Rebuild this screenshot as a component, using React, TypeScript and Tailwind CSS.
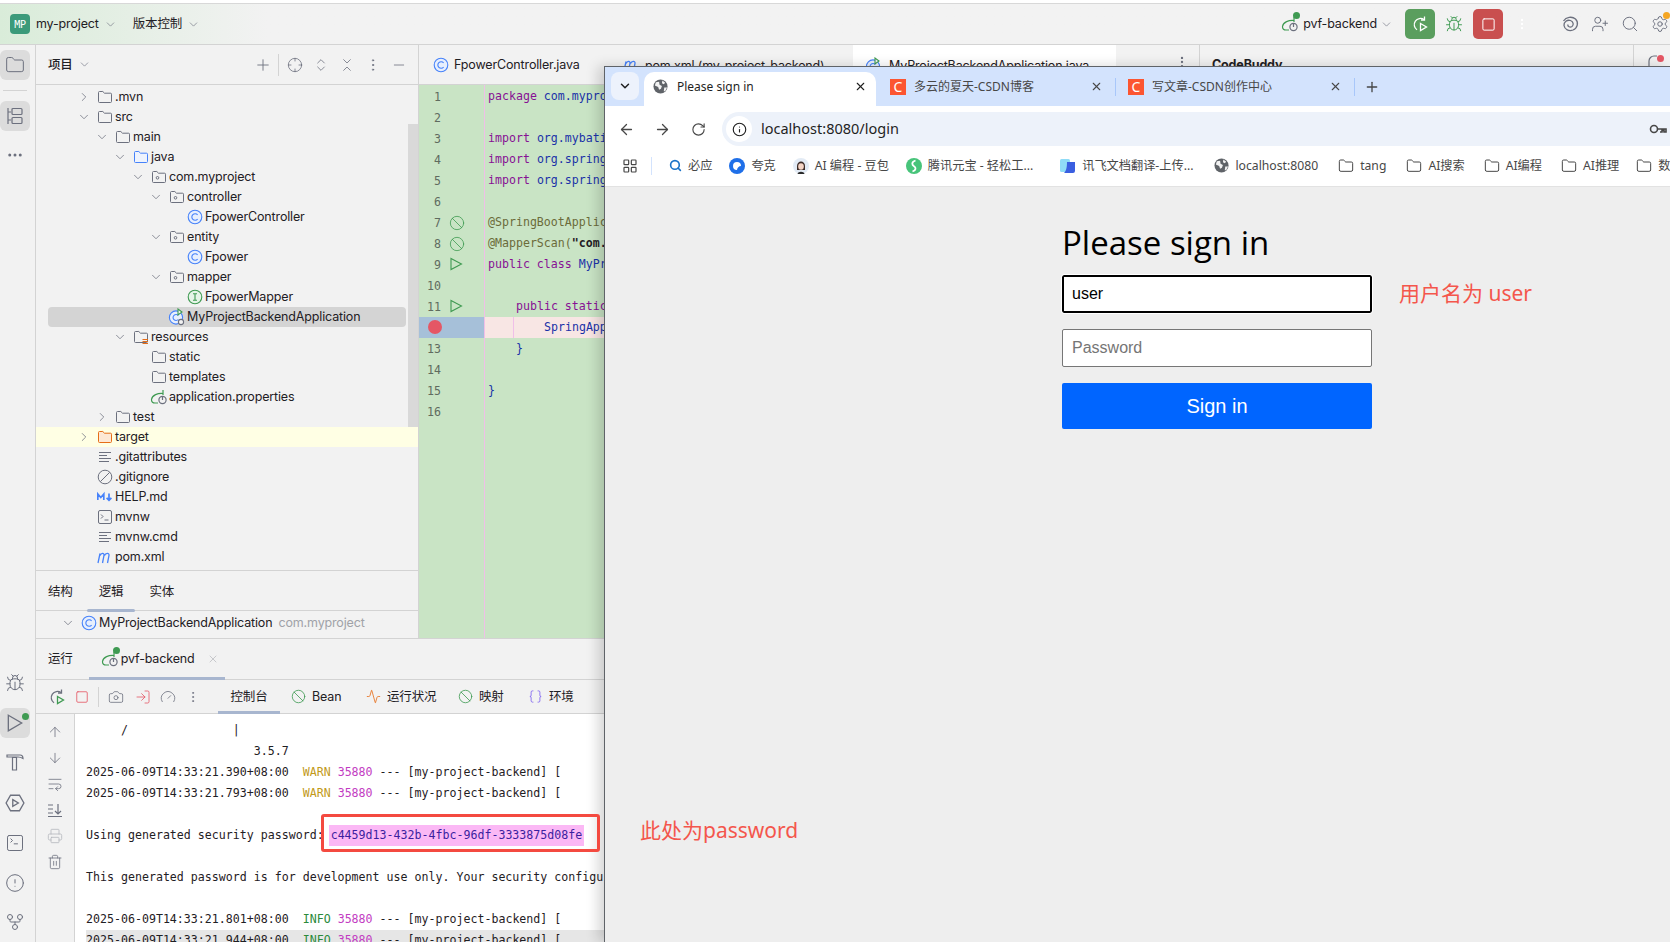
import React from 'react';
import {
  Activity, ArrowDown, ArrowLeft, ArrowRight, ArrowUp, Ban, Braces, Bug, Camera, ChevronDown, ChevronRight,
  ChevronsDownUp, ChevronsUpDown, CircleAlert, Crosshair, Ellipsis, EllipsisVertical, Folder, Gauge, GitFork,
  Info, LayoutGrid, LogIn, Minus, Plus, Printer, RotateCw, Search, Settings, Square, SquareTerminal,
  Trash2, UserPlus, WrapText, X,
} from 'lucide-react';

const gray = '#6c707e';

const ClassIcon = ({ color = '#4682fa', letter = 'C' }: { color?: string; letter?: 'C' | 'I' }) => (
  <svg width="16" height="16" viewBox="0 0 16 16" fill="none" stroke={color} strokeWidth="1.1" className="shrink-0">
    <circle cx="8" cy="8" r="6.8" fill={color === '#4682fa' ? '#e7effd' : '#e6f4e8'} />
    {letter === 'C' ? <path d="M10.6 5.8A3.3 3.3 0 1 0 10.6 10.2" /> : <path d="M6 4.8h4M6 11.2h4M8 4.8v6.4" />}
  </svg>
);

const SpringIcon = () => (
  <svg width="18" height="18" viewBox="0 0 18 18" fill="none" strokeWidth="1.2" className="shrink-0">
    <path d="M13 5.5C8 5 2 7 1.5 11.5 1.3 14 3 15 5 15h3" stroke="#3f9a52" />
    <path d="M13 2v5" stroke="#3f9a52" />
    <circle cx="12.5" cy="12" r="3.6" stroke={gray} />
    <path d="M12.5 9v3" stroke={gray} />
  </svg>
);

const RunConfigIcon = () => (
  <div className="relative shrink-0">
    <SpringIcon />
    <div className="absolute -right-[1px] -top-[3px] size-[7px] rounded-full bg-[#3f9a52]" />
  </div>
);

const AppIcon = () => (
  <svg width="18" height="18" viewBox="0 0 18 18" fill="none" strokeWidth="1.1" className="shrink-0">
    <circle cx="8" cy="9.5" r="6.6" stroke="#4682fa" fill="#e7effd" />
    <path d="M10.3 7.5A3 3 0 1 0 10.3 11.5" stroke="#4682fa" />
    <path d="M10 1v6l4-3z" stroke="#3f9a52" fill="#f2f2f2" />
    <circle cx="13" cy="14" r="2.6" stroke={gray} fill="#f2f2f2" />
  </svg>
);

const RerunIcon = ({ color, play }: { color: string; play: string }) => (
  <svg width="18" height="18" viewBox="0 0 18 18" fill="none" strokeWidth="1.3" className="shrink-0">
    <path d="M13 4.500A6.200 6.200 0 1 0 6 14.800" stroke={color} />
    <path d="M13.500 1.500v3.500H10" stroke={color} />
    <path d="M9.500 8.500 15.500 12 9.500 15.500z" stroke={play} />
  </svg>
);

const PackageFolder = () => (
  <svg width="16" height="16" viewBox="0 0 16 16" fill="none" stroke={gray} strokeWidth="1" className="shrink-0">
    <path d="M1.5 3.5a1 1 0 0 1 1-1h3.3l1.7 1.7h6a1 1 0 0 1 1 1v7.3a1 1 0 0 1-1 1h-11a1 1 0 0 1-1-1z" />
    <circle cx="6.5" cy="8.8" r="1.3" />
  </svg>
);

const PlainFolder = ({ stroke = gray, fill = 'none', badge = false }: { stroke?: string; fill?: string; badge?: boolean }) => (
  <svg width="16" height="16" viewBox="0 0 16 16" fill={fill} stroke={stroke} strokeWidth="1" className="shrink-0">
    <path d="M1.5 3.5a1 1 0 0 1 1-1h3.3l1.7 1.7h6a1 1 0 0 1 1 1v7.3a1 1 0 0 1-1 1h-11a1 1 0 0 1-1-1z" />
    {badge && <path d="M9.5 10.5h5.5M9.5 12.5h5.5M9.5 14.5h5.5" stroke="#e66d17" strokeWidth="1.2" />}
  </svg>
);

const LinesIcon = () => (
  <svg width="16" height="16" viewBox="0 0 16 16" stroke={gray} strokeWidth="1" className="shrink-0">
    <path d="M2 3.5h12M2 6.5h8M2 9.5h12M2 12.5h10" />
  </svg>
);

const IgnoreIcon = () => (
  <svg width="16" height="16" viewBox="0 0 16 16" fill="none" stroke={gray} strokeWidth="1" className="shrink-0">
    <circle cx="8" cy="8" r="6.8" />
    <path d="M3.4 12.6 12.6 3.4" />
  </svg>
);

const MdIcon = () => (
  <svg width="16" height="16" viewBox="0 0 16 16" fill="none" stroke="#4682fa" strokeWidth="1.7" className="shrink-0">
    <path d="M0.8 11V5l3 3.5 3-3.5v6M12 4.5v6.5M9.6 8.8 12 11.2l2.4-2.4" />
  </svg>
);

const ShellIcon = () => (
  <svg width="16" height="16" viewBox="0 0 16 16" fill="none" stroke={gray} strokeWidth="1" className="shrink-0">
    <rect x="1.5" y="1.5" width="13" height="13" rx="1.5" />
    <path d="M4 5.5 6 7.5 4 9.5M7.5 11h4" />
  </svg>
);

const MavenIcon = () => (
  <svg width="16" height="16" viewBox="0 0 16 16" fill="none" stroke="#4682fa" strokeWidth="1.3" className="shrink-0">
    <path d="M1 14 3 4.5M3 6.5C4 4 7.5 3.500 7 6.500L5.500 14M7.500 6.500C8.500 4 12.500 3.500 12 6.500L10.500 14" />
  </svg>
);

const StructureIcon = () => (
  <svg width="20" height="20" viewBox="0 0 20 20" fill="none" stroke={gray} strokeWidth="1.2">
    <path d="M3 2v16M3 6h3M3 14h3" />
    <rect x="7" y="2.500" width="10" height="6" rx="1" />
    <rect x="7" y="11.500" width="10" height="6" rx="1" />
  </svg>
);

const HammerIcon = () => (
  <svg width="20" height="20" viewBox="0 0 20 20" fill="none" stroke={gray} strokeWidth="1.2">
    <path d="M2 3h13c2 0 3 1.500 3 3.500-1.500-1-3-1.500-5-1.500v0H2z" />
    <path d="M7.500 5.500h4V18h-4z" />
  </svg>
);

const SpiralIcon = () => (
  <svg width="18" height="18" viewBox="0 0 18 18" fill="none" stroke={gray} strokeWidth="1.3" className="shrink-0">
    <path d="M2.500 6C5 2 11 1 14.500 4c3.500 3.500 2 9-2.500 11-4 1.500-8.500-.5-9-4.500C2.800 7 6 4.500 9.500 5.500c3 1 3.500 4.500 1.500 6-2 1.300-4.500 0-4.200-2" />
  </svg>
);

const ScrollEndIcon = () => (
  <svg width="16" height="16" viewBox="0 0 16 16" fill="none" stroke={gray} strokeWidth="1.2">
    <path d="M1 3h5M1 7h5M1 11h5M1 14.500h14M11 2v10M8 9l3 3 3-3" />
  </svg>
);

const KeyIcon = () => (
  <svg width="18" height="18" viewBox="0 0 18 18" fill="none" stroke="#474747" strokeWidth="1.6" className="ml-auto mr-[3px] shrink-0">
    <circle cx="5" cy="9" r="3.500" />
    <path d="M8.500 9H17v3h-2v-1.500h-2V12h-2" />
  </svg>
);

const QuarkIcon = () => (
  <svg width="16" height="16" viewBox="0 0 16 16" className="shrink-0">
    <circle cx="8" cy="8" r="8" fill="#1f6fe8" />
    <path d="M8 4a4 4 0 1 0 0 8c0-2 2-4 4-4a4 4 0 0 0-4-4z" fill="#ffffff" />
  </svg>
);

const YuanbaoIcon = () => (
  <svg width="16" height="16" viewBox="0 0 16 16" fill="none" className="shrink-0">
    <circle cx="8" cy="8" r="8" fill="#47c47a" />
    <path d="M9.500 2.500C5 4 6 7 8 8.200c2 1.200 2.500 4-1.500 5.300" stroke="#ffffff" strokeWidth="1.800" />
  </svg>
);

const DoubaoIcon = () => (
  <svg width="16" height="16" viewBox="0 0 16 16" className="shrink-0">
    <circle cx="8" cy="8" r="8" fill="#e3ebf5" />
    <path d="M4 8c0-6 8-6 8 0v4H4z" fill="#3d2b26" />
    <ellipse cx="8" cy="8.500" rx="2.800" ry="3.300" fill="#f5d5c6" />
    <path d="M4.500 16c.5-3 6.500-3 7 0z" fill="#2a2a2a" />
  </svg>
);

const XunfeiIcon = () => (
  <svg width="16" height="16" viewBox="0 0 16 16" className="shrink-0">
    <rect x="0" y="1" width="10" height="13" rx="1.500" fill="#8fdcf7" />
    <path d="M7 4h8v9a2 2 0 0 1-2 2H4c2-2 3-5 3-11z" fill="#3a5fe0" />
  </svg>
);

type TreeRow = { label: string; depth: number; chevron?: 'open' | 'closed'; icon: React.ReactNode; selected?: boolean; marked?: boolean };

const treeRows: TreeRow[] = [
  { label: '.mvn', depth: 0, chevron: 'closed', icon: <PlainFolder /> },
  { label: 'src', depth: 0, chevron: 'open', icon: <PlainFolder /> },
  { label: 'main', depth: 1, chevron: 'open', icon: <PlainFolder /> },
  { label: 'java', depth: 2, chevron: 'open', icon: <PlainFolder stroke="#4682fa" fill="#eef3fd" /> },
  { label: 'com.myproject', depth: 3, chevron: 'open', icon: <PackageFolder /> },
  { label: 'controller', depth: 4, chevron: 'open', icon: <PackageFolder /> },
  { label: 'FpowerController', depth: 5, icon: <ClassIcon /> },
  { label: 'entity', depth: 4, chevron: 'open', icon: <PackageFolder /> },
  { label: 'Fpower', depth: 5, icon: <ClassIcon /> },
  { label: 'mapper', depth: 4, chevron: 'open', icon: <PackageFolder /> },
  { label: 'FpowerMapper', depth: 5, icon: <ClassIcon color="#3f9a52" letter="I" /> },
  { label: 'MyProjectBackendApplication', depth: 4, icon: <AppIcon />, selected: true },
  { label: 'resources', depth: 2, chevron: 'open', icon: <PlainFolder badge /> },
  { label: 'static', depth: 3, icon: <PlainFolder /> },
  { label: 'templates', depth: 3, icon: <PlainFolder /> },
  { label: 'application.properties', depth: 3, icon: <SpringIcon /> },
  { label: 'test', depth: 1, chevron: 'closed', icon: <PlainFolder /> },
  { label: 'target', depth: 0, chevron: 'closed', icon: <PlainFolder stroke="#e66d17" fill="#fde8d4" />, marked: true },
  { label: '.gitattributes', depth: 0, icon: <LinesIcon /> },
  { label: '.gitignore', depth: 0, icon: <IgnoreIcon /> },
  { label: 'HELP.md', depth: 0, icon: <MdIcon /> },
  { label: 'mvnw', depth: 0, icon: <ShellIcon /> },
  { label: 'mvnw.cmd', depth: 0, icon: <LinesIcon /> },
  { label: 'pom.xml', depth: 0, icon: <MavenIcon /> },
];

const depthPad = ['pl-[41px]', 'pl-[59px]', 'pl-[77px]', 'pl-[95px]', 'pl-[113px]', 'pl-[131px]'];

const ProjectTree = () => (
  <div className="relative flex-1 pt-[2px]">
    <div className="absolute right-0 top-[39px] h-[308px] w-[10px] bg-[#d9d9d9]" />
    {treeRows.map(row => (
      <div key={row.label} className={`relative h-[20px] ${row.marked ? 'bg-[#ffffe4]' : ''}`}>
        {row.selected && <div className="absolute inset-y-0 left-[12px] w-[358px] rounded-[4px] bg-[#d4d4d4]" />}
        <div className={`relative flex h-full items-center ${depthPad[row.depth]}`}>
          <div className="flex w-[20px] shrink-0 items-center">
            {row.chevron === 'open' && <ChevronDown size={14} strokeWidth={1.3} color={gray} />}
            {row.chevron === 'closed' && <ChevronRight size={14} strokeWidth={1.3} color={gray} />}
          </div>
          <div className="flex w-[16px] shrink-0 justify-center">{row.icon}</div>
          <span className="ml-[2px] text-[12.5px] text-[#1f2024]">{row.label}</span>
        </div>
      </div>
    ))}
  </div>
);

const K = ({ children }: { children: React.ReactNode }) => <span className="text-[#871094]">{children}</span>;
const P = ({ children }: { children: React.ReactNode }) => <span className="text-[#1a32a8]">{children}</span>;

const codeLines: React.ReactNode[] = [
  <><K>package</K> <P>com.myproject;</P></>,
  '',
  <><K>import</K> <P>org.mybatis.spring;</P></>,
  <><K>import</K> <P>org.springframework;</P></>,
  <><K>import</K> <P>org.springframework;</P></>,
  '',
  <span className="text-[#6b6b3a]">@SpringBootApplication</span>,
  <><span className="text-[#6b6b3a]">@MapperScan(</span><span className="font-bold text-[#1f2024]">"com.myproject"</span></>,
  <><K>public class</K> <P>MyProjectBackendApplication</P></>,
  '',
  <span className="ml-[28px]"><K>public static void</K></span>,
  <span className="ml-[56px]"><P>SpringApplication.run</P></span>,
  <span className="ml-[28px]"><P>{'}'}</P></span>,
  '',
  <P>{'}'}</P>,
  '',
];

const PlayGutter = () => (
  <svg width="14" height="14" viewBox="0 0 14 14" fill="none" stroke="#3f9a52" strokeWidth="1.1"><path d="M2 1.500 12.500 7 2 12.500z" /></svg>
);

const gutterIcons: Record<number, React.ReactNode> = {
  7: <Ban size={16} strokeWidth={1.2} color="#3f9a52" />,
  8: <Ban size={16} strokeWidth={1.2} color="#3f9a52" />,
  9: <PlayGutter />,
  11: <PlayGutter />,
};

const Editor = () => (
  <div className="flex w-[781px] flex-col border-r border-[#d3d3d3]">
    <div className="flex h-[40px] shrink-0 border-b border-[#d3d3d3] text-[12.5px] text-[#1f2024]">
      <div className="flex w-[166px] items-center gap-[5px] pl-[14px] pt-[1px]">
        <ClassIcon />
        <span>FpowerController.java</span>
      </div>
      <div className="flex w-[268px] items-start gap-[6px] pl-[38px] pt-[12px]">
        <MavenIcon />
        <span>pom.xml (my-project-backend)</span>
      </div>
      <div className="flex w-[263px] items-start gap-[6px] bg-white pl-[12px] pt-[12px]">
        <AppIcon />
        <span>MyProjectBackendApplication.java</span>
      </div>
      <div className="flex flex-1 items-start justify-end pr-[10px] pt-[10px]">
        <EllipsisVertical size={14} color={gray} />
      </div>
    </div>
    <div className="flex flex-1 overflow-hidden bg-[#c9e4c5] font-['DejaVu_Sans_Mono',monospace] text-[11.6px] tracking-normal">
      <div className="flex w-[65px] shrink-0 flex-col pt-[1px]">
        {codeLines.map((_, i) => (
          <div key={i} className={`relative h-[21px] ${i === 11 ? 'bg-[#a6c0d9]' : ''}`}>
            {i === 11 ? (
              <div className="absolute left-[9px] top-[3px] size-[14px] rounded-full bg-[#e55765]" />
            ) : (
              <span className="absolute right-[43px] top-[3px] text-[#5f6b5f]">{i + 1}</span>
            )}
            {gutterIcons[i + 1] && <div className="absolute left-[30px] top-[3px]">{gutterIcons[i + 1]}</div>}
          </div>
        ))}
      </div>
      <div className="flex-1 border-l border-[#f0bfe8] pt-[1px]">
        {codeLines.map((line, i) => (
          <div key={i} className={`relative h-[21px] whitespace-pre pl-[3px] leading-[21px] ${i === 11 ? 'bg-[#f8e6e4]' : ''}`}>
            {i === 11 && <div className="absolute inset-y-0 left-[28px] w-px bg-[#f0bfe8]" />}
            {line}
          </div>
        ))}
      </div>
    </div>
  </div>
);

const Warn = () => <span className="text-[#c29a1a]"> WARN </span>;
const Info2 = () => <span className="text-[#2a8a3a]"> INFO </span>;
const Pid = () => <span className="text-[#c23bc2]">35880</span>;

const logRow = (time: string, level: React.ReactNode) => (
  <>{time} {level}<Pid /> --- [my-project-backend] [</>
);

const consoleRows: { id: string; node: React.ReactNode; shaded?: boolean }[] = [
  { id: 'a', node: '     /               |' },
  { id: 'b', node: '                        3.5.7' },
  { id: 'c', node: logRow('2025-06-09T14:33:21.390+08:00', <Warn />) },
  { id: 'd', node: logRow('2025-06-09T14:33:21.793+08:00', <Warn />) },
  { id: 'e', node: '' },
  { id: 'f', node: <>Using generated security password: <span className="-mx-[2px] inline-block h-[21px] bg-[#fbb8f5] px-[2px] leading-[21px] text-[#3b1fa0]">c4459d13-432b-4fbc-96df-3333875d08fe</span></> },
  { id: 'g', node: '' },
  { id: 'h', node: 'This generated password is for development use only. Your security configuration must be updated' },
  { id: 'i', node: '' },
  { id: 'j', node: logRow('2025-06-09T14:33:21.801+08:00', <Info2 />) },
  { id: 'k', node: logRow('2025-06-09T14:33:21.944+08:00', <Info2 />), shaded: true },
];

const runTabs = [
  { label: 'Bean', icon: <Ban size={15} strokeWidth={1.3} color="#3f9a52" />, w: 'w-[75px]' },
  { label: '运行状况', icon: <Activity size={15} strokeWidth={1.3} color="#e66d17" />, w: 'w-[92px]' },
  { label: '映射', icon: <Ban size={15} strokeWidth={1.3} color="#3f9a52" />, w: 'w-[70px]' },
  { label: '环境', icon: <Braces size={15} strokeWidth={1.3} color="#7a5cf0" />, w: 'w-[70px]' },
];

const RunPanel = () => (
  <div className="flex h-[304px] flex-col border-t border-[#d3d3d3]">
    <div className="flex h-[41px] shrink-0 items-center border-b border-[#d3d3d3] text-[12.5px] text-[#1f2024]">
      <span className="ml-[12px] mt-[1px]">运行</span>
      <div className="relative ml-[16px] flex h-full w-[136px] items-center gap-[2px] pl-[12px]">
        <RunConfigIcon />
        <span className="mt-[1px]">pvf-backend</span>
        <X size={12} strokeWidth={1.2} color="#a9abb2" className="ml-[10px]" />
        <div className="absolute inset-x-0 bottom-[-1px] h-[3px] bg-[#a8b6cf]" />
      </div>
    </div>
    <div className="flex h-[34px] shrink-0 items-center border-b border-[#d3d3d3] text-[12.5px] text-[#1f2024]">
      <div className="ml-[12px]"><RerunIcon color={gray} play="#3f9a52" /></div>
      <Square size={14} strokeWidth={1.4} color="#e55765" className="ml-[9px]" />
      <div className="ml-[9px] h-[20px] w-px bg-[#d3d3d3]" />
      <Camera size={16} strokeWidth={1.2} color={gray} className="ml-[9px]" />
      <LogIn size={16} strokeWidth={1.2} color="#e55765" className="ml-[11px]" />
      <Gauge size={16} strokeWidth={1.2} color={gray} className="ml-[9px]" />
      <EllipsisVertical size={14} strokeWidth={1.4} color={gray} className="ml-[10px]" />
      <div className="relative ml-[18px] flex h-full w-[62px] items-center justify-center">
        <span className="mt-[1px]">控制台</span>
        <div className="absolute inset-x-0 bottom-[-1px] h-[3px] bg-[#a8b6cf]" />
      </div>
      <div className="ml-[11px] flex">
        {runTabs.map(t => (
          <div key={t.label} className={`flex items-center gap-[6px] ${t.w}`}>
            {t.icon}
            <span className="mt-[1px]">{t.label}</span>
          </div>
        ))}
      </div>
    </div>
    <div className="flex flex-1 overflow-hidden bg-white">
      <div className="flex w-[39px] shrink-0 flex-col items-center gap-[10px] border-r border-[#d3d3d3] bg-[#f2f2f2] pt-[10px]">
        <ArrowUp size={16} strokeWidth={1.2} color={gray} />
        <ArrowDown size={16} strokeWidth={1.2} color={gray} />
        <WrapText size={16} strokeWidth={1.2} color={gray} />
        <ScrollEndIcon />
        <Printer size={16} strokeWidth={1.2} color="#b4b6bd" />
        <Trash2 size={16} strokeWidth={1.2} color={gray} />
      </div>
      <div className="flex-1 pl-[11px] pt-[6px] font-['DejaVu_Sans_Mono',monospace] text-[11.62px] tracking-normal text-[#1f2024]">
        {consoleRows.map(r => (
          <div key={r.id} className={`h-[21px] whitespace-pre leading-[21px] ${r.shaded ? 'bg-[#e6e6e6]' : ''}`}>{r.node}</div>
        ))}
      </div>
    </div>
  </div>
);

const CsdnIcon = () => (
  <div className="flex size-[16px] shrink-0 items-center justify-center bg-[#fc5531] text-[14px] leading-none text-white">C</div>
);

function Globe() {
  return (
    <svg width="15" height="15" viewBox="0 0 16 16" className="shrink-0">
      <circle cx="8" cy="8" r="7.5" fill="#5f6368" />
      <path d="M3 3.500 6.500 3 7 6 9.500 7.500 8.500 10.500 6.500 11.500 5.500 8.500 2 7zM10 1.500l3 2.500-1.500 1.500-2-1zM12 9h3l-2 4-1.500 0z" fill="#f2f2f2" />
    </svg>
  );
}

const BookmarkFolder = () => <Folder size={16} strokeWidth={1.5} color="#474747" className="shrink-0" />;

const bookmarks: { label: string; icon: React.ReactNode; extra?: string }[] = [
  { label: '必应', icon: <Search size={13} strokeWidth={3} color="#1a73c8" /> },
  { label: '夸克', icon: <QuarkIcon /> },
  { label: 'AI 编程 - 豆包', icon: <DoubaoIcon /> },
  { label: '腾讯元宝 - 轻松工...', icon: <YuanbaoIcon /> },
  { label: '讯飞文档翻译-上传...', icon: <XunfeiIcon />, extra: 'ml-[10px]' },
  { label: 'localhost:8080', icon: <Globe />, extra: 'ml-[4px]' },
  { label: 'tang', icon: <BookmarkFolder />, extra: 'ml-[3px]' },
  { label: 'AI搜索', icon: <BookmarkFolder />, extra: 'ml-[3px]' },
  { label: 'AI编程', icon: <BookmarkFolder />, extra: 'ml-[2px]' },
  { label: 'AI推理', icon: <BookmarkFolder />, extra: 'ml-[2px]' },
  { label: '数据', icon: <BookmarkFolder /> },
];

const Browser = () => (
  <div className="absolute bottom-0 left-[604px] right-0 top-[66px] flex flex-col border-l border-t border-[#5f6368] bg-[#eeeeee] font-['Noto_Sans','Noto_Sans_CJK_SC',sans-serif] tracking-normal shadow-[-6px_0_12px_rgba(0,0,0,0.16)]">
    <div className="flex h-[39px] shrink-0 items-end bg-[#d3e3fd] text-[12px] text-[#474747]">
      <div className="mb-[6px] ml-[6px] flex size-[28px] items-center justify-center rounded-[8px] bg-[#edf2fc]">
        <ChevronDown size={14} strokeWidth={2.5} color="#1f1f1f" />
      </div>
      <div className="ml-[5px] flex h-[34px] w-[232px] items-center rounded-t-[10px] bg-white pb-[5px] pl-[9px] text-[#1f1f1f]">
        <Globe />
        <span className="ml-[9px]">Please sign in</span>
        <X size={13} strokeWidth={2} color="#1f1f1f" className="ml-auto mr-[9px]" />
      </div>
      <div className="ml-[14px] flex h-[34px] w-[226px] items-center pb-[5px]">
        <CsdnIcon />
        <span className="ml-[8px]">多云的夏天-CSDN博客</span>
        <X size={13} strokeWidth={2} color="#474747" className="ml-auto mr-[12px]" />
        <div className="h-[18px] w-px bg-[#a8c7fa]" />
      </div>
      <div className="ml-[12px] flex h-[34px] w-[227px] items-center pb-[5px]">
        <CsdnIcon />
        <span className="ml-[8px]">写文章-CSDN创作中心</span>
        <X size={13} strokeWidth={2} color="#474747" className="ml-auto mr-[12px]" />
        <div className="h-[18px] w-px bg-[#a8c7fa]" />
      </div>
      <div className="mb-[11px] ml-[9px]">
        <Plus size={16} strokeWidth={2} color="#474747" />
      </div>
    </div>
    <div className="flex h-[40px] shrink-0 items-end bg-white">
      <div className="flex h-[34px] flex-1 items-center">
        <ArrowLeft size={17} strokeWidth={1.8} color="#474747" className="ml-[13px]" />
        <ArrowRight size={17} strokeWidth={1.8} color="#474747" className="ml-[19px]" />
        <RotateCw size={15} strokeWidth={1.8} color="#474747" className="ml-[20px]" />
        <div className="ml-[16px] flex h-full flex-1 items-center rounded-l-full bg-[#edf2fa]">
          <div className="ml-[4px] flex size-[26px] items-center justify-center rounded-full bg-white">
            <Info size={15} strokeWidth={1.8} color="#1f1f1f" />
          </div>
          <span className="ml-[9px] text-[14.5px] text-[#1f1f1f]">localhost:8080/login</span>
          <KeyIcon />
        </div>
      </div>
    </div>
    <div className="flex h-[41px] shrink-0 items-center overflow-hidden border-b border-[#e2e2e2] bg-white text-[12.2px] text-[#474747]">
      <LayoutGrid size={16} strokeWidth={1.8} color="#474747" className="ml-[17px] shrink-0" />
      <div className="ml-[13px] h-[18px] w-px shrink-0 bg-[#d3e3fd]" />
      <div className="ml-[17px] flex shrink-0 gap-[17px]">
        {bookmarks.map(b => (
          <div key={b.label} className={`flex items-center gap-[6px] ${b.extra ?? ''}`}>
            {b.icon}
            <span>{b.label}</span>
          </div>
        ))}
      </div>
    </div>
    <div className="flex flex-1 flex-col pl-[457px] pt-[33px] font-['Liberation_Sans','Noto_Sans_CJK_SC',sans-serif]">
      <h2 className="mb-[9px] h-[46px] font-['Open_Sans',sans-serif] text-[33px] leading-[46px] text-black">Please sign in</h2>
      <div className="flex h-[38px] w-[310px] items-center rounded-[2px] border-2 border-black bg-white pl-[8px] text-[16px] text-black outline outline-1 outline-white">user</div>
      <div className="mt-[16px] flex h-[38px] w-[310px] items-center rounded-[2px] border border-[#767676] bg-white pl-[9px] text-[16px] text-[#757575]">Password</div>
      <div className="mt-[16px] flex h-[46px] w-[310px] items-center justify-center rounded-[2px] bg-[#0065ff] text-[20px] text-white">Sign in</div>
    </div>
  </div>
);

export default function App() {
  return (
    <div className="relative h-[942px] w-[1670px] overflow-hidden whitespace-nowrap bg-[#f2f2f2] font-['Inter','Noto_Sans_CJK_SC',sans-serif] tracking-[-0.15px]">
      <div className="h-[3px] bg-white" />
      <div className="flex h-[42px] items-center border-y border-t-[#d8d8d8] border-b-[#d3d3d3] bg-gradient-to-r from-[#d9ecd9] via-[#f2f2f2] via-[16%] to-[#f2f2f2] text-[12.5px] text-[#1f2024]">
        <div className="ml-[10px] flex size-[20px] items-center justify-center rounded-[4px] bg-[#3b9a7a] font-['DejaVu_Sans_Mono',monospace] text-[10px] text-white">MP</div>
        <span className="ml-[6px]">my-project</span>
        <ChevronDown size={13} strokeWidth={1.2} color={gray} className="ml-[5px]" />
        <span className="ml-[16px]">版本控制</span>
        <ChevronDown size={13} strokeWidth={1.2} color={gray} className="ml-[5px]" />
        <div className="ml-auto flex items-center pr-[1px]">
          <RunConfigIcon />
          <span className="ml-[4px]">pvf-backend</span>
          <ChevronDown size={13} strokeWidth={1.2} color={gray} className="ml-[3px]" />
          <div className="ml-[12px] flex size-[30px] items-center justify-center rounded-[5px] bg-[#5a9e5e]">
            <RerunIcon color="#ffffff" play="#ffffff" />
          </div>
          <Bug size={18} strokeWidth={1.3} color="#3f9a52" className="ml-[10px]" />
          <div className="ml-[10px] flex size-[30px] items-center justify-center rounded-[5px] bg-[#c94f4f]">
            <Square size={15} strokeWidth={1.6} color="#ffffff" />
          </div>
          <EllipsisVertical size={14} color="#ffffff" className="ml-[12px]" />
          <div className="ml-[32px]"><SpiralIcon /></div>
          <UserPlus size={18} strokeWidth={1.3} color={gray} className="ml-[12px]" />
          <Search size={18} strokeWidth={1.3} color={gray} className="ml-[12px]" />
          <div className="relative ml-[12px]">
            <Settings size={18} strokeWidth={1.3} color={gray} />
            <div className="absolute -right-[1px] -top-[3px] size-[7px] rounded-full bg-[#f5a623]" />
          </div>
        </div>
      </div>
      <div className="flex h-[897px]">
        <div className="flex w-[36px] shrink-0 flex-col items-center border-r border-[#d3d3d3] pt-[5px]">
          <div className="mr-[5px] flex size-[30px] items-center justify-center rounded-[6px] bg-[#dcdcdc]">
            <Folder size={20} strokeWidth={1.2} color={gray} />
          </div>
          <div className="my-[10px] mr-[5px] h-px w-[24px] bg-[#d3d3d3]" />
          <div className="mr-[5px] flex size-[30px] items-center justify-center rounded-[6px] bg-[#dcdcdc]">
            <StructureIcon />
          </div>
          <Ellipsis size={18} color={gray} className="mr-[5px] mt-[15px]" />
          <Bug size={20} strokeWidth={1.2} color={gray} className="mr-[5px] mt-[509px]" />
          <div className="relative mr-[5px] mt-[15px] flex size-[30px] items-center justify-center rounded-[6px] bg-[#dcdcdc]">
            <svg width="20" height="20" viewBox="0 0 18 18" fill="none" stroke={gray} strokeWidth="1.2"><path d="M3 2 15 9 3 16z" /></svg>
            <div className="absolute right-[1px] top-[5px] size-[7px] rounded-full bg-[#3f9a52]" />
          </div>
          <div className="mr-[5px] mt-[14px]"><HammerIcon /></div>
          <div className="mr-[5px] mt-[21px] flex">
            <svg width="20" height="20" viewBox="0 0 18 18" fill="none" stroke={gray} strokeWidth="1.2"><path d="M5 2h8l4 7-4 7H5L1 9z" /><path d="M7 6l5 3-5 3z" /></svg>
          </div>
          <SquareTerminal size={20} strokeWidth={1.2} color={gray} className="mr-[5px] mt-[20px]" />
          <CircleAlert size={20} strokeWidth={1.2} color={gray} className="mr-[5px] mt-[20px]" />
          <GitFork size={20} strokeWidth={1.2} color={gray} className="mr-[5px] mt-[19px]" />
        </div>
        <div className="flex w-0 flex-1 flex-col">
          <div className="flex h-[593px] shrink-0">
            <div className="flex w-[383px] shrink-0 flex-col border-r border-[#d3d3d3]">
              <div className="flex h-[40px] shrink-0 items-center border-b border-[#d3d3d3] text-[12.5px] text-[#1f2024]">
                <span className="ml-[12px] mt-[2px] font-medium">项目</span>
                <ChevronDown size={13} strokeWidth={1.2} color={gray} className="ml-[5px]" />
                <Plus size={18} strokeWidth={1.2} color={gray} className="ml-[163px]" />
                <div className="ml-[6px] h-[22px] w-px bg-[#d3d3d3]" />
                <Crosshair size={16} strokeWidth={1.2} color={gray} className="ml-[8px]" />
                <ChevronsUpDown size={16} strokeWidth={1.2} color={gray} className="ml-[10px]" />
                <ChevronsDownUp size={16} strokeWidth={1.2} color={gray} className="ml-[10px]" />
                <EllipsisVertical size={16} strokeWidth={1.4} color={gray} className="ml-[10px]" />
                <Minus size={16} strokeWidth={1.2} color={gray} className="ml-[10px]" />
              </div>
              <ProjectTree />
              <div className="flex h-[41px] shrink-0 items-center gap-[26px] border-y border-[#d3d3d3] pl-[12px] pt-[3px] text-[12.5px] text-[#1f2024]">
                <span>结构</span>
                <span className="relative">
                  逻辑
                  <div className="absolute -inset-x-[12px] bottom-[-11px] h-[3px] rounded-full bg-[#a8b6cf]" />
                </span>
                <span>实体</span>
              </div>
              <div className="flex h-[27px] shrink-0 items-center pb-[3px] pl-[25px] text-[12.5px] text-[#1f2024]">
                <ChevronDown size={14} strokeWidth={1.3} color={gray} />
                <div className="ml-[6px]"><ClassIcon /></div>
                <span className="ml-[2px]">MyProjectBackendApplication</span>
                <span className="ml-[6px] text-[#a0a2a8]">com.myproject</span>
              </div>
            </div>
            <Editor />
            <div className="flex w-[434px] shrink-0 border-r border-[#d3d3d3] pl-[12px] pt-[11px]">
              <span className="text-[12.5px] font-bold text-[#1f2024]">CodeBuddy</span>
            </div>
            <div className="relative flex-1">
              <svg width="16" height="16" viewBox="0 0 16 16" fill="none" stroke={gray} strokeWidth="1.2" className="absolute left-[14px] top-[10px]">
                <path d="M1 15V6a5 5 0 0 1 5-5h3" />
              </svg>
              <div className="absolute left-[23px] top-[10px] size-[7px] rounded-full bg-[#e55765]" />
            </div>
          </div>
          <RunPanel />
        </div>
      </div>
      <Browser />
      <div className="absolute left-[321px] top-[814px] h-[38px] w-[279px] rounded-[3px] border-[3px] border-[#f44a40]" />
      <span className="absolute left-[1399px] top-[278px] font-['Noto_Sans','Noto_Sans_CJK_SC',sans-serif] text-[21px] leading-[30px] tracking-normal text-[#f4564c]">用户名为 user</span>
      <span className="absolute left-[640px] top-[815px] font-['Noto_Sans','Noto_Sans_CJK_SC',sans-serif] text-[21px] leading-[30px] tracking-normal text-[#f4564c]">此处为password</span>
    </div>
  );
}
